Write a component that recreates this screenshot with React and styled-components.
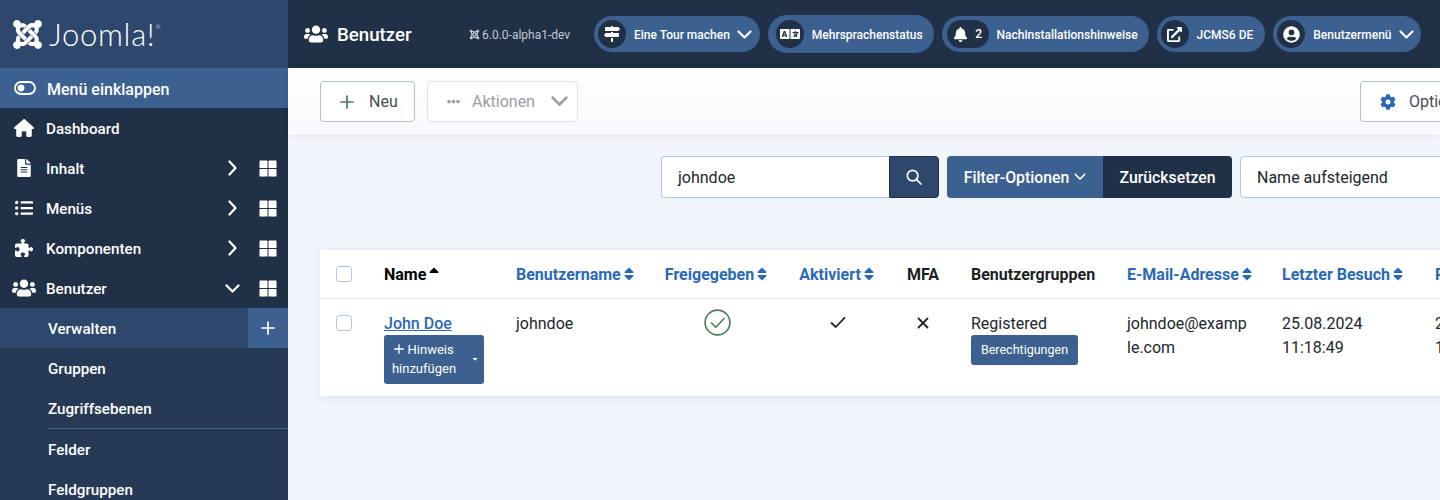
import React from "react";
import styled, { createGlobalStyle } from "styled-components";
import {
  FaJoomla, FaUsers, FaFileAlt, FaListUl, FaEllipsisH, FaCog, FaMapSigns, FaLanguage, FaBell,
  FaExternalLinkAlt, FaUserCircle, FaSort, FaSortUp, FaCaretDown,
} from "react-icons/fa";
import { FaHouse, FaPuzzlePiece } from "react-icons/fa6";

const dark = "#1f3047";
const mid = "#2e486d";
const light = "#3c6090";
const link = "#2a69b8";

const Global = createGlobalStyle`
  html, body { margin: 0; padding: 0; height: 100%; background: #f0f4fb; }
  body { font-family: Roboto, "Liberation Sans", sans-serif; color: #22262a; font-size: 16px; }
  * { box-sizing: border-box; }
`;

const Page = styled.div`
  display: flex;
  width: 1440px;
  height: 500px;
  overflow: hidden;
`;

const Sidebar = styled.aside`
  width: 288px;
  flex: none;
  background: #263a56;
  display: flex;
  flex-direction: column;
`;
const Brand = styled.div`
  height: 68px;
  flex: none;
  background: ${mid};
  display: flex;
  align-items: center;
  padding-left: 11px;
  color: #fff;
  gap: 5px;
`;
const Wordmark = styled.span`
  font-family: Lato, sans-serif;
  font-weight: 300;
  font-size: 31px;
  letter-spacing: 0.7px;
  line-height: 1;
`;
const Registered = styled.sup`
  font-size: 6px;
  vertical-align: 17px;
  line-height: 0;
`;
const MenuRow = styled.div`
  height: ${(p) => p.$h || 40}px;
  flex: none;
  display: flex;
  align-items: center;
  color: #fff;
  font-size: 15.2px;
  font-weight: 500;
  padding-left: ${(p) => (p.$sub ? 48 : 12)}px;
  background: ${(p) => p.$bg || dark};
`;
const MenuIcon = styled.span`
  width: 24px;
  margin-right: 10px;
  display: flex;
  justify-content: center;
  font-size: ${(p) => p.$size || 18}px;
`;
const MenuLabel = styled.span`
  flex: 1;
  padding-top: 2px;
`;
const MenuArrow = styled.span`
  width: 32px;
  display: flex;
  justify-content: center;
`;
const MenuGrid = styled.span`
  width: 40px;
  display: flex;
  justify-content: center;
`;
const CollapseRow = styled(MenuRow)`
  font-size: 16px;
  padding-left: 13px;
`;
const PlusCell = styled.span`
  width: 40px;
  height: 40px;
  background: ${light};
  display: flex;
  align-items: center;
  justify-content: center;
`;
const Separator = styled.div`
  height: 1px;
  flex: none;
  margin-left: 48px;
  background: ${light};
`;

const Main = styled.main`
  flex: 1;
  min-width: 0;
  display: flex;
  flex-direction: column;
`;
const Header = styled.header`
  height: 68px;
  flex: none;
  background: ${dark};
  display: flex;
  align-items: center;
  color: #fff;
  padding-left: 16px;
`;
const Title = styled.div`
  display: flex;
  align-items: center;
  width: 165px;
  gap: 9px;
  font-weight: 500;
  font-size: 18.7px;
`;
const TitleText = styled.span`
  padding-top: 2px;
`;
const Version = styled.div`
  display: flex;
  align-items: center;
  gap: 2px;
  font-size: 12px;
  color: #c3c9d2;
  width: 125px;
`;
const VersionText = styled.span`
  padding-top: 2px;
`;
const Pills = styled.div`
  display: flex;
  gap: 8px;
  align-items: center;
`;
const Pill = styled.div`
  height: ${(p) => (p.$tall ? 38 : 36)}px;
  border-radius: 19px;
  background: ${light};
  display: flex;
  align-items: center;
  padding: 0 ${(p) => p.$pr || 11}px 0 ${(p) => p.$pl || 4}px;
  font-size: 12px;
  font-weight: 500;
  white-space: nowrap;
`;
const PillText = styled.span`
  padding-top: 2px;
`;
const PillIcon = styled.span`
  height: 28px;
  width: ${(p) => (p.$wide ? 42 : 28)}px;
  flex: none;
  border-radius: 14px;
  background: ${dark};
  display: flex;
  align-items: center;
  justify-content: center;
  gap: 7px;
  margin-right: 8px;
  font-size: ${(p) => p.$size || 15}px;
`;
const Digit = styled.span`
  font-size: 12px;
`;
const PillCaret = styled.span`
  display: flex;
  margin-left: 7px;
`;

const Toolbar = styled.div`
  height: 67px;
  flex: none;
  background: linear-gradient(#fff, #f7f9fd);
  box-shadow: 0 1px 6px rgba(30, 60, 110, 0.06);
  padding: 13px 0 0 32px;
  display: flex;
  gap: 12px;
  align-items: flex-start;
`;
const ToolButton = styled.div`
  height: 41px;
  width: ${(p) => p.$w}px;
  flex: none;
  display: flex;
  align-items: center;
  background: #fff;
  border: 1px solid ${(p) => (p.$disabled ? "#dde2ea" : "#b2bfcd")};
  border-radius: 4px;
  padding-left: 19px;
  font-size: 16px;
  color: ${(p) => (p.$disabled ? "#9a9ea6" : "#454c56")};
  ${(p) => p.$end && "margin-left: auto; margin-right: -40px;"}
`;
const ToolIcon = styled.span`
  display: flex;
  font-size: ${(p) => p.$size || 14}px;
  color: ${(p) => p.$color || "inherit"};
  margin-right: ${(p) => p.$gap ?? 15}px;
  margin-left: ${(p) => p.$ml || 0}px;
`;

const Content = styled.div`
  padding: 21px 0 0 32px;
`;
const FilterBar = styled.div`
  display: flex;
  margin-left: 341px;
  height: 42px;
  width: max-content;
`;
const SearchInput = styled.div`
  width: 228px;
  flex: none;
  background: #fff;
  border: 1px solid #b2c8e4;
  border-right: 0;
  border-radius: 4px 0 0 4px;
  padding-left: 16px;
  display: flex;
  align-items: center;
  font-size: 16px;
`;
const SearchButton = styled.div`
  width: 50px;
  flex: none;
  background: ${mid};
  border: 1px solid ${dark};
  border-radius: 0 4px 4px 0;
  color: #fff;
  display: flex;
  align-items: center;
  justify-content: center;
  margin-right: 8px;
`;
const FilterButton = styled.div`
  width: 156px;
  flex: none;
  background: ${light};
  color: #fff;
  border-radius: 4px 0 0 4px;
  display: flex;
  align-items: center;
  justify-content: center;
  gap: 5px;
  font-size: 15.8px;
  font-weight: 500;
`;
const ResetButton = styled.div`
  width: 129px;
  flex: none;
  background: ${dark};
  color: #fff;
  border-radius: 0 4px 4px 0;
  display: flex;
  align-items: center;
  justify-content: center;
  font-size: 15.8px;
  font-weight: 500;
  margin-right: 8px;
`;
const SelectBox = styled.div`
  width: 260px;
  flex: none;
  background: #fff;
  border: 1px solid #b2c8e4;
  border-radius: 4px;
  padding-left: 16px;
  display: flex;
  align-items: center;
  font-size: 16px;
`;

const TableCard = styled.table`
  margin-top: 52px;
  table-layout: fixed;
  width: 1300px;
  border-collapse: collapse;
  background: #fff;
  box-shadow: 0 2px 8px rgba(60, 90, 160, 0.1);
`;
const Th = styled.th`
  height: 48px;
  padding: 2px 0 0 16px;
  text-align: left;
  font-size: 16px;
  font-weight: 700;
  white-space: nowrap;
  color: ${(p) => (p.$link ? link : p.$black ? "#000" : "#1c1f23")};
  border-bottom: 1px solid #dfe3ec;
  ${(p) => p.$center && "text-align: center; padding: 2px 0 0;"}
`;
const Td = styled.td`
  height: 98px;
  padding: 13px 0 0 16px;
  vertical-align: top;
  font-size: 16px;
  line-height: 24px;
  ${(p) => p.$center && "text-align: center; padding: 13px 0 0;"}
  ${(p) => p.$break && "word-break: break-all; padding-right: 16px;"}
`;
const SortIcon = styled.span`
  display: inline-flex;
  font-size: 16px;
  margin-left: 0;
  vertical-align: -2px;
`;
const Checkbox = styled.span`
  display: block;
  width: 16px;
  height: 16px;
  border: 1px solid #b2c8e4;
  border-radius: 3px;
  background: #fff;
  margin-top: ${(p) => p.$mt ?? -2}px;
`;
const UserLink = styled.a`
  display: block;
  color: ${link};
  font-weight: 500;
  text-decoration: underline;
`;
const NoteButton = styled.div`
  display: flex;
  align-items: center;
  width: 100px;
  height: 49px;
  margin-top: -1px;
  background: ${light};
  border-radius: 3px;
  color: #fff;
  padding: 0 5px 0 7px;
  font-size: 13px;
  line-height: 19px;
  text-align: center;
`;
const NoteText = styled.span`
  width: 66px;
  flex: none;
`;
const NoteCaret = styled.span`
  display: flex;
  font-size: 8px;
  margin-left: auto;
`;
const PermBadge = styled.div`
  display: flex;
  align-items: center;
  justify-content: center;
  width: 107px;
  height: 30px;
  margin-top: -1px;
  background: ${light};
  color: #fff;
  border-radius: 3px;
  font-size: 12.5px;
`;
const StatusIcon = styled.span`
  display: inline-flex;
  vertical-align: middle;
  margin-top: -3px;
`;

const ToggleIcon = () => (
  <svg width="22" height="14" viewBox="0 0 22 14" fill="none">
    <rect x="1" y="1" width="20" height="12" rx="6" stroke="#fff" strokeWidth="1.8" />
    <circle cx="7" cy="7" r="3.4" fill="#fff" />
  </svg>
);
const GridIcon = () => (
  <svg width="18" height="17" viewBox="0 0 18 17" fill="#fff">
    <rect width="8" height="7.5" x="0.5" y="0.5" rx="0.6" />
    <rect width="8" height="7.5" x="9.5" y="0.5" rx="0.6" />
    <rect width="8" height="7.5" x="0.5" y="9" rx="0.6" />
    <rect width="8" height="7.5" x="9.5" y="9" rx="0.6" />
  </svg>
);
const ChevronDown = ({ w = 15, sw = 2.2, color = "currentColor" }) => (
  <svg width={w} height={w * 0.6} viewBox="0 0 15 9" fill="none" stroke={color} strokeWidth={sw} strokeLinecap="round" strokeLinejoin="round">
    <polyline points="1.5,1.5 7.5,7.5 13.5,1.5" />
  </svg>
);
const ChevronRight = () => (
  <svg width="9" height="16" viewBox="0 0 9 16" fill="none" stroke="#fff" strokeWidth="2.2" strokeLinecap="round" strokeLinejoin="round">
    <polyline points="1.5,1.5 7.5,8 1.5,14.5" />
  </svg>
);
const Plus = ({ size = 14, sw = 1.7, color = "currentColor" }) => (
  <svg width={size} height={size} viewBox="0 0 14 14" fill="none" stroke={color} strokeWidth={sw} strokeLinecap="round">
    <path d="M7 1v12M1 7h12" />
  </svg>
);
const SearchGlyph = () => (
  <svg width="16" height="16" viewBox="0 0 16 16" fill="none" stroke="#fff" strokeWidth="1.7" strokeLinecap="round">
    <circle cx="6.6" cy="6.6" r="5.3" />
    <path d="M10.6 10.6 15 15" />
  </svg>
);
const CheckGlyph = () => (
  <svg width="16" height="13" viewBox="0 0 16 13" fill="none" stroke="#22262a" strokeWidth="1.8" strokeLinecap="round" strokeLinejoin="round">
    <polyline points="1.5,7 5.8,11 14.5,1.8" />
  </svg>
);
const CrossGlyph = () => (
  <svg width="12" height="12" viewBox="0 0 12 12" fill="none" stroke="#22262a" strokeWidth="1.8" strokeLinecap="round">
    <path d="M1.5 1.5l9 9M10.5 1.5l-9 9" />
  </svg>
);
const PublishedGlyph = () => (
  <svg width="27" height="27" viewBox="0 0 27 27" fill="none" stroke="#457d54" strokeWidth="1.6" strokeLinecap="round" strokeLinejoin="round">
    <circle cx="13.5" cy="13.5" r="12.4" />
    <polyline points="7.5,14 11.8,18.2 20,9.5" />
  </svg>
);

const MenuItem = ({ icon, label, size, open, grid = true }) => (
  <MenuRow>
    <MenuIcon $size={size}>{icon}</MenuIcon>
    <MenuLabel>{label}</MenuLabel>
    {grid && (
      <>
        <MenuArrow>{open ? <ChevronDown /> : <ChevronRight />}</MenuArrow>
        <MenuGrid><GridIcon /></MenuGrid>
      </>
    )}
  </MenuRow>
);

const SortHead = ({ children, center }) => (
  <Th $link $center={center}>
    {children}
    <SortIcon><FaSort /></SortIcon>
  </Th>
);

const SubItem = ({ children }) => (
  <MenuRow $sub $bg="#263a56"><MenuLabel>{children}</MenuLabel></MenuRow>
);

export default function App() {
  return (
    <>
      <Global />
      <Page>
        <Sidebar>
          <Brand>
            <FaJoomla size={33} />
            <Wordmark>Joomla!<Registered>®</Registered></Wordmark>
          </Brand>
          <CollapseRow $bg={light}>
            <MenuIcon><ToggleIcon /></MenuIcon>
            <MenuLabel>Menü einklappen</MenuLabel>
          </CollapseRow>
          <MenuItem icon={<FaHouse />} label="Dashboard" size={20} grid={false} />
          <MenuItem icon={<FaFileAlt />} label="Inhalt" />
          <MenuItem icon={<FaListUl />} label="Menüs" />
          <MenuItem icon={<FaPuzzlePiece />} label="Komponenten" />
          <MenuItem icon={<FaUsers />} label="Benutzer" size={24} open />
          <MenuRow $sub $bg={mid}>
            <MenuLabel>Verwalten</MenuLabel>
            <PlusCell><Plus /></PlusCell>
          </MenuRow>
          <SubItem>Gruppen</SubItem>
          <SubItem>Zugriffsebenen</SubItem>
          <Separator />
          <SubItem>Felder</SubItem>
          <SubItem>Feldgruppen</SubItem>
        </Sidebar>
        <Main>
          <Header>
            <Title><FaUsers size={24} /><TitleText>Benutzer</TitleText></Title>
            <Version><FaJoomla size={11} /><VersionText>6.0.0-alpha1-dev</VersionText></Version>
            <Pills>
              <Pill $pr={8}>
                <PillIcon $size={16}><FaMapSigns /></PillIcon>
                <PillText>Eine Tour machen</PillText>
                <PillCaret><ChevronDown /></PillCaret>
              </Pill>
              <Pill $tall $pl={8}>
                <PillIcon $size={20}><FaLanguage /></PillIcon>
                <PillText>Mehrsprachenstatus</PillText>
              </Pill>
              <Pill $pl={5} $pr={11}>
                <PillIcon $wide $size={15}><FaBell /><Digit>2</Digit></PillIcon>
                <PillText>Nachinstallationshinweise</PillText>
              </Pill>
              <Pill $pr={12}>
                <PillIcon><FaExternalLinkAlt /></PillIcon>
                <PillText>JCMS6 DE</PillText>
              </Pill>
              <Pill $pr={7}>
                <PillIcon $size={17}><FaUserCircle /></PillIcon>
                <PillText>Benutzermenü</PillText>
                <PillCaret><ChevronDown /></PillCaret>
              </Pill>
            </Pills>
          </Header>
          <Toolbar>
            <ToolButton $w={95}>
              <ToolIcon $gap={15}><Plus color="#457d54" /></ToolIcon>Neu
            </ToolButton>
            <ToolButton $w={151} $disabled>
              <ToolIcon $size={13} $gap={12}><FaEllipsisH /></ToolIcon>Aktionen
              <ToolIcon $gap={0} $ml={16}><ChevronDown w={17} sw={2.4} /></ToolIcon>
            </ToolButton>
            <ToolButton $w={120} $end>
              <ToolIcon $color={link} $size={16} $gap={13}><FaCog /></ToolIcon>Optionen
            </ToolButton>
          </Toolbar>
          <Content>
            <FilterBar>
              <SearchInput>johndoe</SearchInput>
              <SearchButton><SearchGlyph /></SearchButton>
              <FilterButton>Filter-Optionen <ChevronDown w={12} sw={2} /></FilterButton>
              <ResetButton>Zurücksetzen</ResetButton>
              <SelectBox>Name aufsteigend</SelectBox>
            </FilterBar>
            <TableCard>
              <colgroup>
                {[48, 132, 150, 135, 106, 64, 156, 155, 153, 201].map((w, i) => (
                  <col key={i} width={w} />
                ))}
              </colgroup>
              <thead>
                <tr>
                  <Th><Checkbox /></Th>
                  <Th $black>Name<SortIcon><FaSortUp /></SortIcon></Th>
                  <SortHead>Benutzername</SortHead>
                  <SortHead center>Freigegeben</SortHead>
                  <SortHead center>Aktiviert</SortHead>
                  <Th $center>MFA</Th>
                  <Th>Benutzergruppen</Th>
                  <SortHead>E-Mail-Adresse</SortHead>
                  <SortHead>Letzter Besuch</SortHead>
                  <SortHead>Registrierungsdatum</SortHead>
                </tr>
              </thead>
              <tbody>
                <tr>
                  <Td><Checkbox $mt={3} /></Td>
                  <Td>
                    <UserLink href="#">John Doe</UserLink>
                    <NoteButton>
                      <NoteText><Plus size={10} sw={1.8} /> Hinweis hinzufügen</NoteText>
                      <NoteCaret><FaCaretDown /></NoteCaret>
                    </NoteButton>
                  </Td>
                  <Td>johndoe</Td>
                  <Td $center><StatusIcon><PublishedGlyph /></StatusIcon></Td>
                  <Td $center><StatusIcon><CheckGlyph /></StatusIcon></Td>
                  <Td $center><StatusIcon><CrossGlyph /></StatusIcon></Td>
                  <Td>Registered<PermBadge>Berechtigungen</PermBadge></Td>
                  <Td $break>johndoe@example.com</Td>
                  <Td>25.08.2024<br />11:18:49</Td>
                  <Td>25.08.2024<br />11:18:49</Td>
                </tr>
              </tbody>
            </TableCard>
          </Content>
        </Main>
      </Page>
    </>
  );
}
